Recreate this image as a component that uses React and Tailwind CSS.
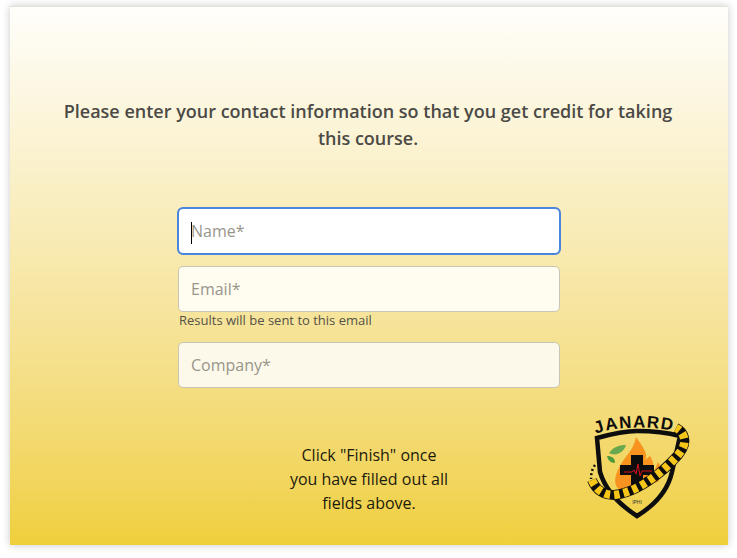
function JanardLogo() {
  const band = 'M22 80 C 26 90, 34 95, 44 95 C 62 93, 80 81, 93 70 C 105 59, 117 48, 114 38 C 113 33, 110 30, 106 28'
  return (
    <svg viewBox="0 0 140 130" className="absolute left-[570px] top-[400px] w-[140px] h-[130px]">
      <defs>
        <path id="janard-arc" d="M26 34 C 45 26, 85 25, 110 33" />
      </defs>
      {/* shield */}
      <path d="M27 38 C 45 33, 58 31, 67 31 C 80 31, 95 32, 110 36 L 102 72 C 98 90, 85 105, 67 116 C 50 105, 36 92, 30 72 Z" fill="none" stroke="#0d0d0d" strokeWidth="4.5" strokeLinejoin="miter" />
      {/* flame */}
      <path d="M66 37 C 72 46, 79 54, 75 60 L 80 56 C 84 62, 84 68, 84 72 L 88 62 C 92 68, 92 76, 88 82 L 50 90 C 44 86, 43 78, 50 66 C 55 56, 64 50, 66 37 Z" fill="#f7931e" />
      {/* leaves */}
      <path d="M39 53 C 44 46, 50 45, 56 45 C 54 52, 46 57, 39 53 Z" fill="#6aa84f" />
      <path d="M37 56 C 42 56, 45 58, 45 63 C 40 63, 38 60, 37 56 Z" fill="#4f9a3a" />
      {/* cross + ecg */}
      <path d="M61 55 H 73 V 65 H 84 V 75 H 73 V 86 H 61 V 75 H 50 V 65 H 61 Z" fill="#0d0d0d" />
      <path d="M54 72 H 62 L 64 70 L 66 74 L 68 64 L 70 76 L 72 71 H 82" fill="none" stroke="#d8121f" strokeWidth="1" />
      {/* striped band */}
      <path d={band} fill="none" stroke="#0d0d0d" strokeWidth="10" />
      <path d={band} fill="none" stroke="#f5c518" strokeWidth="8.5" strokeDasharray="5.5 4" />
      <path d="M25 65 C 22 69, 21 74, 21 79" fill="none" stroke="#0d0d0d" strokeWidth="2.5" strokeDasharray="2 2.5" />
      {/* wordmark */}
      <text fontFamily="'Liberation Sans', sans-serif" fontWeight="700" fontSize="17" fill="#0d0d0d" letterSpacing="1.2">
        <textPath href="#janard-arc">JANARD</textPath>
      </text>
      <text x="67" y="104" textAnchor="middle" fontFamily="'Liberation Sans', sans-serif" fontSize="5" fill="#333">IPHI</text>
    </svg>
  )
}

function Field({ placeholder, autoFocus, bg }) {
  return (
    <input
      type="text"
      placeholder={placeholder}
      autoFocus={autoFocus}
      className={`block w-[382px] h-[46px] rounded-[5px] border border-[#c9c5b4] px-3 text-[16px] text-[#333] placeholder:text-[#98958b] focus:outline-2 focus:-outline-offset-1 focus:outline-[#4a86dc] focus:bg-white caret-black ${bg}`}
    />
  )
}

export default function App() {
  return (
    <div className="relative w-[737px] h-[558px] bg-white font-['Open_Sans',sans-serif] overflow-hidden">
      <div className="absolute left-[10px] top-[6px] w-[718px] h-[539px] flex flex-col items-center bg-gradient-to-b from-[#fffefb] to-[#f0cf3a] border-t border-[#e4e2dc] shadow-[0_0_8px_rgba(0,0,0,0.22)]">
        <h1 className="mt-[91px] mr-[2px] w-[640px] text-center text-[18px] leading-[27px] font-semibold text-[#4b4a46]">
          Please enter your contact information so that you get credit for taking this course.
        </h1>
        <div className="mt-[56px] flex flex-col">
          <div className="relative">
            <Field placeholder="Name*" autoFocus bg="bg-white" />
            {/* caret as it shows in the focused field */}
            <span className="absolute left-[13px] top-[14px] w-px h-[22px] bg-black"></span>
          </div>
          <div className="mt-3">
            <Field placeholder="Email*" bg="bg-[#fffcf0]" />
          </div>
          <p className="pl-[1px] text-[13px] leading-[17px] text-[#555248]">Results will be sent to this email</p>
          <div className="mt-[13px]">
            <Field placeholder="Company*" bg="bg-[#fdf9ea]" />
          </div>
        </div>
        <p className="mt-[55px] w-[200px] text-center text-[16px] leading-[24px] text-[#1c1a0c]">
          Click "Finish" once<br />you have filled out all<br />fields above.
        </p>
      </div>
      <JanardLogo />
    </div>
  )
}
